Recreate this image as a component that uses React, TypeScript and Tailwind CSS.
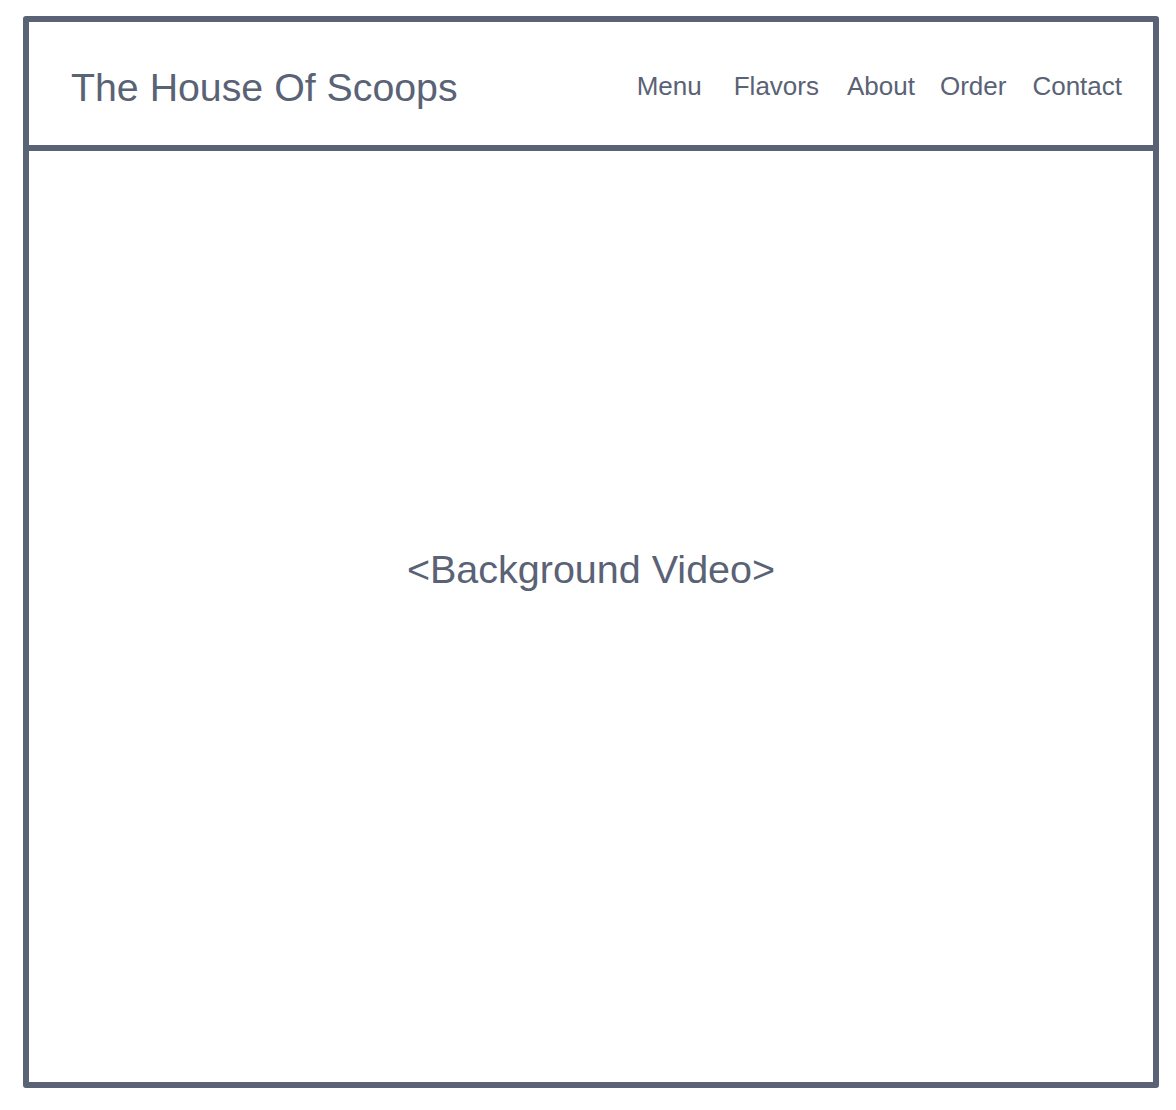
const navLinks = [
  { label: "Menu", className: "" },
  { label: "Flavors", className: "ml-[32px]" },
  { label: "About", className: "ml-[28px]" },
  { label: "Order", className: "ml-[25px]" },
  { label: "Contact", className: "ml-[26px]" },
];

export default function App() {
  return (
    <div className="min-h-[1110px] bg-white pl-[23px] pt-[16px] font-['Liberation_Sans',Arial,sans-serif] text-[#5a6275]">
      <div className="flex h-[1072px] w-[1136px] flex-col rounded-[3px] border-[6px] border-[#5a6275]">
        {/* header */}
        <header className="flex h-[129px] shrink-0 items-center justify-between border-b-[6px] border-[#5a6275] pl-[42px] pr-[31px]">
          <h1 className="mt-[8px] text-[39.3px] leading-none">The House Of Scoops</h1>
          <nav className="mt-[4px] flex items-center text-[26px] leading-none">
            {navLinks.map((link) => (
              <a key={link.label} href="#" className={link.className}>
                {link.label}
              </a>
            ))}
          </nav>
        </header>

        {/* hero */}
        <main className="flex flex-1 items-center justify-center pb-[94px]">
          <p className="text-[39.5px] leading-none">&lt;Background Video&gt;</p>
        </main>
      </div>
    </div>
  );
}
